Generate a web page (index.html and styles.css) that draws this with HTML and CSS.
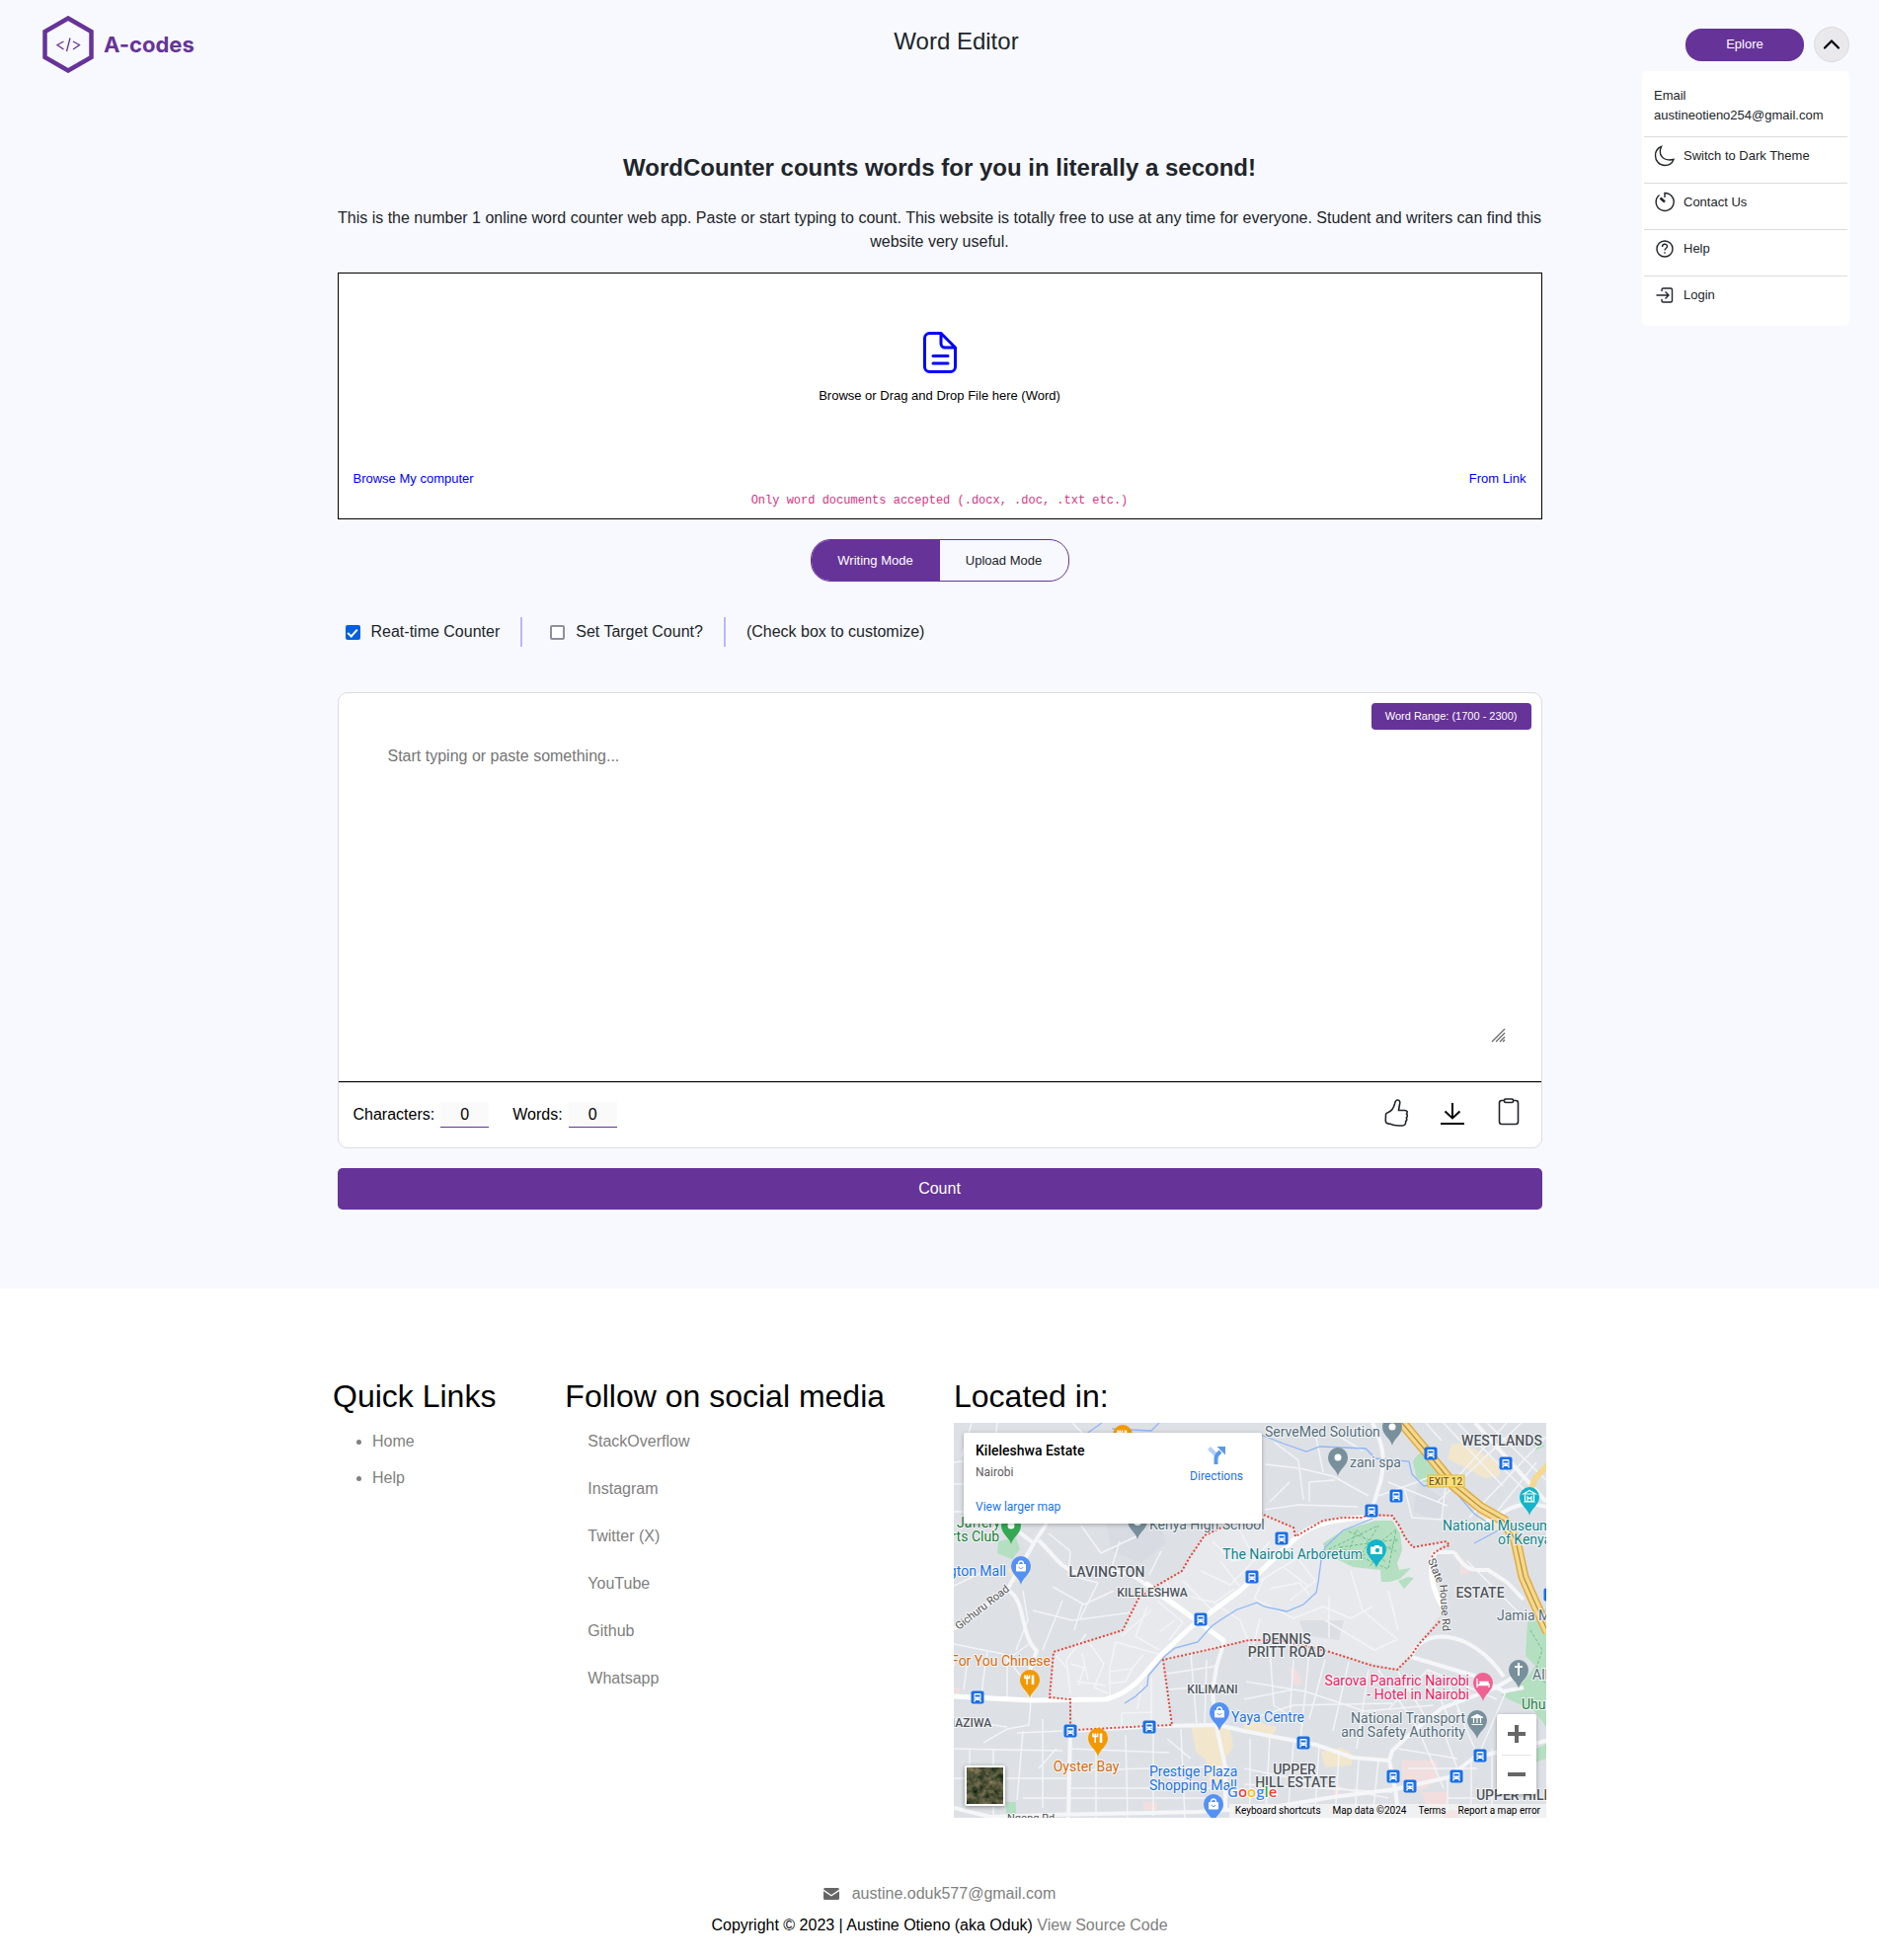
FILE: index.html
```html
<!DOCTYPE html>
<html lang="en">
<head>
<meta charset="utf-8">
<meta name="viewport" content="width=device-width, initial-scale=1">
<title>Word Editor</title>
<link rel="stylesheet" href="styles.css">
</head>
<body>
<div class="hero">
  <header class="topbar">
    <a class="brand" href="#">
      <svg class="brand-mark" viewBox="0 0 52 58" aria-hidden="true">
        <path d="M26 2.500 49.500 16v26L26 55.500 2.500 42V16z" fill="none" stroke="#663399" stroke-width="4.500"/>
        <path d="M21.500 26l-6.500 3.500 6.500 4.500M31 26l6.500 3.500-6.500 4.500M28 22.500l-3.500 13.500" fill="none" stroke="#663399" stroke-width="1.300"/>
      </svg>
      <span>A-codes</span>
    </a>
    <h1 class="title">Word Editor</h1>
    <div class="actions">
      <button class="explore" type="button">Eplore</button>
      <button class="toggle-menu" type="button" aria-label="Close menu">
        <svg width="18" height="18" viewBox="0 0 18 18"><path d="M2 12.500 9 5.500l7 7" fill="none" stroke="#000" stroke-width="2.200" stroke-linecap="round"/></svg>
      </button>
    </div>
    <nav class="menu">
      <div class="menu-user">Email<br>austineotieno254@gmail.com</div>
      <a class="menu-item" href="#">
        <svg viewBox="0 0 22 22"><path d="M7.500 1.500C3.500 3 1.500 6.500 1.500 10.500c0 5.500 4 10 9.500 10 4 0 7.500-2 9-6-7 1.500-12-1-13.500-6-.6-2.500 0-5 1-7z"/></svg>
        Switch to Dark Theme</a>
      <a class="menu-item" href="#">
        <svg viewBox="0 0 22 22"><path d="M5.500 3.500A9 9 0 1 0 11 1.500v4.500"/><path d="M6.500 6.500 11 10.500" stroke-width="2.500"/></svg>
        Contact Us</a>
      <a class="menu-item" href="#">
        <svg viewBox="0 0 22 22"><circle cx="11" cy="11" r="8"/><path d="M8.500 9c0-3.500 5-3.500 5-.5 0 2-2.500 2-2.500 4"/><path d="M11 14.200v1.600"/></svg>
        Help</a>
      <a class="menu-item" href="#">
        <svg viewBox="0 0 22 22"><path d="M8 7V5.500A1.500 1.500 0 0 1 9.500 4H17a1.500 1.500 0 0 1 1.500 1.500v11A1.500 1.500 0 0 1 17 18H9.500A1.500 1.500 0 0 1 8 16.500V15M2.500 11h12M11.500 7.500 15 11l-3.500 3.500"/></svg>
        Login</a>
    </nav>
  </header>

  <main class="content">
    <h2 class="headline">WordCounter counts words for you in literally a second!</h2>
    <p class="intro">This is the number 1 online word counter web app. Paste or start typing to count. This website is totally free to use at any time for everyone. Student and writers can find this website very useful.</p>

    <section class="dropzone">
      <svg class="file-icon" viewBox="0 0 48 48" aria-hidden="true"><path d="M13.500 4.500h11.500L39.500 19v19.500a5 5 0 0 1-5 5h-21a5 5 0 0 1-5-5v-29a5 5 0 0 1 5-5zM25 4.500v10.500a4 4 0 0 0 4 4h10.500M17 27.500h15M17 35h15"/></svg>
      <p class="drop-text">Browse or Drag and Drop File here (Word)</p>
      <div class="drop-links"><a href="#">Browse My computer</a><a href="#">From Link</a></div>
      <code class="drop-note">Only word documents accepted (.docx, .doc, .txt etc.)</code>
    </section>

    <div class="modes">
      <button class="mode mode-on" type="button">Writing Mode</button>
      <button class="mode" type="button">Upload Mode</button>
    </div>

    <div class="options">
      <label class="option"><input type="checkbox" checked>Reat-time Counter</label>
      <label class="option"><input type="checkbox">Set Target Count?</label>
      <span class="option-note">(Check box to customize)</span>
    </div>

    <section class="editor">
      <span class="range">Word Range: (1700 - 2300)</span>
      <div class="editor-body">
        <textarea aria-label="Text" placeholder="Start typing or paste something..."></textarea>
        <svg class="grip" viewBox="0 0 15 15" aria-hidden="true"><path d="M1 14 14 1M5 14l9-9M9 14l5-5M12 14l2-2" stroke="#666" stroke-width="1.200"/></svg>
      </div>
      <div class="editor-bar">
        <div class="counts">
          <label>Characters: <input type="text" value="0" readonly></label>
          <label>Words: <input type="text" value="0" readonly></label>
        </div>
        <div class="tools">
          <button type="button" aria-label="Like"><svg viewBox="0 0 24 30"><path d="M1.500 17c0-1.500 1-2 2.500-2.500C8 13 9.500 10 10.500 6c.5-2.500 1-4 3-4s2.700 2 2 4.500l-1 6 6 0c3 .2 3.200 1.800 2 3.500 1.200 1.300 1 2.800-.2 4 .8 1.500.5 2.800-.7 3.800.3 2.600-.8 4.200-3.300 4.200-4 0-7.500 0-10-1-1.500-.8-3-.8-4.500-1-2-.5-2.500-1-2.500-3z"/></svg></button>
          <button type="button" aria-label="Download"><svg viewBox="0 0 24 30"><path d="M12 5v15M4.500 13.500 12 20.500l7.500-7M0 26h24" stroke="#000" stroke-width="2"/></svg></button>
          <button type="button" aria-label="Copy"><svg viewBox="0 0 24 30"><rect x="2.500" y="2.500" width="19" height="24" rx="2.500"/><rect x="7.500" y="1" width="9" height="3.500" rx="1.200" fill="#fff"/></svg></button>
        </div>
      </div>
    </section>

    <button class="count" type="button">Count</button>
  </main>
</div>

<footer class="footer">
  <div class="footer-cols">
    <section>
      <h2>Quick Links</h2>
      <ul class="quick">
        <li><a href="#">Home</a></li>
        <li><a href="#">Help</a></li>
      </ul>
    </section>
    <section>
      <h2>Follow on social media</h2>
      <ul class="social">
        <li><a href="#">StackOverflow</a></li>
        <li><a href="#">Instagram</a></li>
        <li><a href="#">Twitter (X)</a></li>
        <li><a href="#">YouTube</a></li>
        <li><a href="#">Github</a></li>
        <li><a href="#">Whatsapp</a></li>
      </ul>
    </section>
    <section class="located">
      <h2>Located in:</h2>
      <div class="map">
        <svg class="map-canvas" viewBox="0 0 600 400" role="img" aria-label="Map of Kileleshwa Estate">
          <defs>
            <g id="bus"><rect x="-6.500" y="-6.500" width="13" height="13" rx="2" fill="#1a6fe8"/><rect x="-3.500" y="-4" width="7" height="7" rx="1" fill="#fff"/><path d="M-2.500-2.500h5v2h-5z" fill="#1a6fe8"/><path d="M-3 3v1.500M3 3v1.500" stroke="#fff" stroke-width="1.500"/><path d="M-2.500 1.300h1M1.500 1.300h1" stroke="#1a6fe8"/></g>
            <path id="pin" d="M0 19C-1 12.500-10 8.500-10 0A10 10 0 0 1 10 0C10 8.500 1 12.500 0 19z"/>
            <g id="food" fill="none" stroke="#fff"><path d="M-5-4.500v3h4.500v-3M-2.800-4.500V5" stroke-width="1.600"/><path d="M3-4.500V5" stroke-width="2.600"/></g>
            <g id="bag"><rect x="-5" y="-2" width="10" height="7.500" rx="1" fill="#fff"/><path d="M-2.500-2c0-4 5-4 5 0" fill="none" stroke="#fff" stroke-width="1.300"/><path d="M-2 1c.5 2 3.500 2 4 0" fill="none" stroke="#5491f5"/></g>
          </defs>
          <rect width="600" height="400" fill="#dde1e6"/>
          <path fill="#e7e9ed" d="M311 92 344 106 346 115 374 99 414 96 444 94 457 116 465 126 499 120 487 131 484 136 497 189 471 224 449 250 381 232 331 220 299 220 212 240 221 306 122 311 118 280 97 278 101 232 171 210 187 178 231 150 254 114z"/>
          <path fill="#d6dadf" d="M154 102h55l6 20-25 20-30-12zM350 200h45l-5 20-35-5zM470 60l30 20-10 18-25-8z" opacity=".7"/>
          <g fill="#b4dfc1">
            <path d="M374 122 394 109 427 99 444 99 452 112 454 129 449 142 451 149 463 147 452 158 441 161 433 161 432 149 404 146 384 136 376 131z"/>
            <path d="M465 40c4-12 16-12 21-6l7 18c-4 10-18 10-24 4zM450 160l10-4 6 1-10 11zM45 120l18-4 4 12-8 10-15-6zM586 18l8-4 4 10-9 4z"/>
            <path d="M581 202 600 188v120l-12-16-34-16 23-14 12-16-10-10zM590 330l10-5v15l-12 4zM53 384h10v14H53z"/>
          </g>
          <path fill="#f2e6cc" d="M504 22 515 20 556 42 552 54 538 56 500 36zM241 308l38-2 4 22-8 12 4 25-20 2-4-26-10-8zM294 300l33 8-3 8-30-6zM372 333l20-4 14 8-4 10-26 2zM54 148l18-6 6 10-16 10zM530 92l30 8-6 10-22-6z"/>
          <path fill="#f2dedf" d="M454 342h36v20l-16 10-20-4zM474 374h27v19l-19 6zM514 136l12 14-13 4zM339 246l10 6 4 12-8 2zM192 384h14v8h-14zM384 368l8-2-2 14-6-4zM0 268h6v6H0z"/>
          <g class="road thin">
            <path d="M0 40 30 36 60 48 96 50M0 62h22l18-30 4-32M18 0 8 34M72 12l14 30M120 0l10 10M0 90h30l22-12M40 108 60 60M0 165 40 146M96 112l22 18-2 24 30 8-18 36M129 104l20 28 38-18M160 146l8-26M210 130l-12 24M70 170l5 30-12 30M80 190l40 10 60-8M100 166l32 18 30-14M130 184l-8 26M90 230l20-50"/>
            <path d="M315 42 350 46 384 54 420 74M315 88l34-5 60 2M325 20l24 18 5 40M360 80V60l26-2M366 10l8 40M384 10l30 18M440 60l60 24M430 74l55-20M340 60l-20 20M456 64l8 32 30 2 4-34M520 140l60 60M510 0l70 70M540 0l60 58M575 0 490 80M600 14 522 96M560 0 500 66M496 0l60 64M478 0l16 18M590 40l-40 50"/>
            <path d="M134 214l-20 26 4 34M164 222l-6 26v32M164 222l50 14M158 252l22-3 12-14M156 264l18-2 8-16M206 180l26 22-14 18M196 186l-12 30 24 14M118 244l14 4-6 18M130 234l6 26M124 262l30 4M170 310v-16l30-1v14M200 258v36M186 290l4-24M224 200l-16 12M200 190l-30 26M104 236l12 14M138 224l14 20-10 24 14 6"/>
            <path d="M260 180l30 20 10 26M314 158l-10 20 40 20 30-12 28 12 22-12M300 240l10-42M320 168l30-6 10 12M346 134l20 26-26 20M334 146l26 20M310 160l46-28M380 176v42M402 150l12 40 36 30M440 170l10 40M376 200l50 30 22-10M320 226l4 60 30 20M344 240l-4 60M360 232l-10 100M376 240l-16 60M400 242l-16 70M420 250l-12 80M296 262l60 10 60 20 70-6M294 280l50-10M300 300l44-14 100-2M430 250l40 60M450 252l30 50M480 250l26 60M500 262l16 40M440 290l40-40 70 30"/>
            <path d="M270 140l20 26M250 150l30 14 20-20M232 160l30 30M262 120l20 20 30-6M290 110l16 30M320 120l-20 24M240 176l24 6 20-14M214 158l10 20"/>
            <path d="M216 240l52-14M218 270l50-4M216 254l52-8M240 234l6 70M230 310l4 90M256 240l-2 66M202 308v90M174 316l2 84M144 330v70M118 330l100 4M118 352l160-4M118 370h160M70 380h200M78 282l-2 24-22 4-24 14M0 300l54 8M0 330l110 2M40 330v70M70 312l-6 70M90 300v90M0 360h116M16 330v54M54 280V240l22-16M110 312l-46 2M0 224l50 10 24 30M14 240l-4 30M34 230l-6 44M104 330l-18 20M216 320l24 20M214 358l30 6"/>
            <path d="M300 320v80M320 316l-4 80M344 324l-6 76M370 328l-4 60M390 336l-4 64M410 342l-4 58M430 342l-6 58M294 350l146 30M294 366l150 8M470 310l26 60M490 296l22 60M510 290l22 50M450 330l60 10M460 350h70M560 270l-30 70M500 358v42M524 340v60M545 330v70M500 380h60"/>
          </g>
          <g class="road mid">
            <path d="M94 102 81 122 54 169 0 209M86 119c15 14 20 26 36 32 30 2 50-10 78 18l44 30 30 22-8 26-4 26 3 30 10 46v45M81 122 60 106M54 169c20 10 12 45 30 62l-7 20v30"/>
            <path d="M118 312l-2 88M118 312l90-5 60-1 26 6 73 14 37 13 37 3 3-10 17-16 33-27 53-20 30-17M463 237l64 19 30 16 20-4M463 237c10-30 60-30 94 20M441 342l6 29 4 29M294 394l90-15 63-8 54-12 26-20 73-17M0 390l37 9 57-2 153-3 47-3"/>
            <path d="M424 0c10 20 14 36 8 60l-10 32M507 131c12 20 18 18 34 18l20 13 16 17M544 99c20-16 36-20 56-14M487 131l20 0M528 0l72 80M522 108l30-14"/>
          </g>
          <path class="road main" d="M0 277 77 281 154 280C185 272 195 250 211 234L241 206 291 169 347 116C365 100 390 98 422 95M194 162l80 59M497 189c-14-20-16-42-10-58"/>
          <path d="M311 12 334 21 357 29 371 24 417 26 427 36 461 39 464 52 476 64 490 62M507 69l20 23 12 8M173 284l11-7 12-11 1-10 17-20 10-8 23-6 14-16 10-7 16-10 20-7 7 4 23 5 17-7 13-12 2-10 3-23 4-13 18-17 30-12M130 14l20-14M160 6l40 2 8-8M527 122l26-14" fill="none" stroke="#8fb6f6" stroke-width="1.300"/>
          <path d="M380 128l50-24-20 34 38-30-8 40-50-22 60-8-30 28M400 110l48 20M398 136l10-28 30 34M584 210l12 20-8 24 12 10" fill="none" stroke="#6cbd87" stroke-dasharray="3 2"/>
          <g fill="none">
            <path d="M454 0 481 32 507 64 534 86 557 99 569 119 577 156 587 179 602 212" stroke="#e0ab45" stroke-width="11"/>
            <path d="M454 0 481 32 507 64 534 86 557 99 569 119 577 156 587 179 602 212" stroke="#f4d98e" stroke-width="8"/>
            <path d="M454 0 481 32 507 64 534 86 557 99 569 119 577 156 587 179 602 212" stroke="#bd8d31" stroke-width="1.200"/>
            <path d="M602 42 589 56 584 69" stroke="#f4d98e" stroke-width="6"/>
          </g>
          <path class="boundary" d="M492 201 471 224 463 236 449 250 424 246 381 232 331 220 299 220 274 226 212 240 221 306 197 307 122 311 118 310V280L97 278 101 232 171 210 187 178 202 167 231 150 239 136 254 114 271 106 311 92 344 106 346 115 374 99 394 96 414 96 419 93 444 94 451 104 457 116 465 126 499 120 502 124 496 126 487 131 484 136"/>

          <rect x="480" y="53" width="37" height="12" fill="#fbdf7b" stroke="#e5b93c"/>
          <g class="labels">
            <g fill="#546e7a">
              <text x="315" y="14">ServeMed Solution</text><text x="401" y="45">zani spa</text><text x="198" y="108">Kenya High School</text>
              <text x="550" y="200">Jamia Mosque</text><text x="586" y="260">All Saints</text>
              <text class="end" x="518" y="304">National Transport</text><text class="end" x="518" y="318">and Safety Authority</text>
            </g>
            <g fill="#12858d"><text class="end" x="414" y="138">The Nairobi Arboretum</text><text x="495" y="109">National Museum</text><text x="551" y="123">of Kenya</text></g>
            <g fill="#188038"><text x="3" y="106">Jaffery</text><text class="end" x="46" y="120">rts Club</text><text x="575" y="290">Uhuru</text></g>
            <g fill="#1a73e8"><text class="end" x="53" y="155">gton Mall</text><text x="281" y="303">Yaya Centre</text><text x="198" y="358">Prestige Plaza</text><text x="198" y="372">Shopping Mall</text></g>
            <g fill="#d56e0c"><text class="end" x="98" y="246">For You Chinese</text><text class="mid-label" x="134" y="353">Oyster Bay</text></g>
            <g fill="#e91e63"><text class="end" x="522" y="266">Sarova Panafric Nairobi</text><text class="end" x="522" y="280">- Hotel in Nairobi</text></g>
            <g class="area"><text x="155" y="156">LAVINGTON</text><text x="555" y="23">WESTLANDS</text><text x="533" y="177">ESTATE</text><text x="337" y="224">DENNIS</text><text x="337" y="237">PRITT ROAD</text><text x="345" y="356">UPPER</text><text x="346" y="369">HILL ESTATE</text><text x="567" y="382">UPPER HILL</text></g>
            <g class="area small"><text x="201" y="176">KILELESHWA</text><text x="262" y="274">KILIMANI</text><text x="18" y="308">IAZIWA</text></g>
            <g class="street"><text transform="translate(5 210) rotate(-38)">Gichuru Road</text><text transform="translate(480 139) rotate(68)">State</text><text transform="translate(492 164) rotate(86)">House Rd</text><text x="54" y="404">Ngong Rd</text></g>
            <text class="exit" x="498" y="63">EXIT 12</text>
          </g>

          <g>
            <use href="#bus" x="302" y="156"/><use href="#bus" x="483" y="31"/><use href="#bus" x="559" y="41"/><use href="#bus" x="448" y="74"/><use href="#bus" x="423" y="89"/><use href="#bus" x="332" y="117"/><use href="#bus" x="604" y="174"/><use href="#bus" x="250" y="199"/><use href="#bus" x="24" y="278"/><use href="#bus" x="118" y="312"/><use href="#bus" x="198" y="308"/><use href="#bus" x="354" y="324"/><use href="#bus" x="445" y="358"/><use href="#bus" x="462" y="368"/><use href="#bus" x="509" y="358"/><use href="#bus" x="533" y="337"/>
          </g>
          <g fill="#78909c">
            <use href="#pin" x="389" y="35"/><use href="#pin" x="444" y="4"/><use href="#pin" x="186" y="99"/><use href="#pin" x="530" y="301"/><use href="#pin" x="572" y="250"/>
          </g>
          <g fill="#12b5cb"><use href="#pin" x="583" y="75"/><use href="#pin" x="428" y="128"/></g>
          <use href="#pin" x="58" y="104" fill="#34a853"/>
          <g fill="#5491f5"><use href="#pin" x="68" y="145"/><use href="#pin" x="269" y="293"/><use href="#pin" x="263" y="386"/></g>
          <g fill="#f29900"><use href="#pin" x="171" y="12"/><use href="#pin" x="77" y="260"/><use href="#pin" x="146" y="319"/></g>
          <use href="#pin" x="536" y="263" fill="#f06292"/>
          <circle cx="504" cy="400" r="8" fill="#f28b82" opacity=".7"/>
          <g fill="#fff"><circle cx="389" cy="35" r="3.500"/><circle cx="444" cy="4" r="3.500"/><circle cx="58" cy="104" r="3.500"/><circle cx="186" cy="100" r="4"/></g>
          <use href="#food" x="77" y="260"/><use href="#food" x="146" y="319"/><use href="#food" x="171" y="12"/>
          <use href="#bag" x="68" y="145"/><use href="#bag" x="269" y="293"/><use href="#bag" x="263" y="386"/>
          <path d="M572 243v13M568 247h8" stroke="#fff" stroke-width="2"/>
          <path d="M530 259v9M542 264v4M530 265.500h12M533 262.500h8v2h-8z" stroke="#fff" stroke-width="1.300" fill="#fff"/>
          <path d="M524 298.500l6-3 6 3zM526.500 299v5M530 299v5M533.500 299v5M524.500 305.500h11" stroke="#fff" stroke-width="1.200" fill="#fff"/>
          <path d="M577 72l6-3.500 6 3.500zM578.500 73v6.500h9V73M577.500 80h11M581 79v-4l2 2 2-2v4" stroke="#fff" stroke-width="1.200" fill="none"/>
          <path d="M422 125.500h3.500l1-1.500h4l1 1.500h2.500v7.500h-12z" fill="#fff"/><circle cx="429" cy="129" r="2.200" fill="#12b5cb"/>
          <text class="google" x="277" y="379"><tspan fill="#4285f4">G</tspan><tspan fill="#ea4335">o</tspan><tspan fill="#fbbc04">o</tspan><tspan fill="#4285f4">g</tspan><tspan fill="#34a853">l</tspan><tspan fill="#ea4335">e</tspan></text>
        </svg>

        <div class="place">
          <div class="place-info">
            <strong>Kileleshwa Estate</strong>
            <span>Nairobi</span>
            <a href="#">View larger map</a>
          </div>
          <a class="directions" href="#">
            <svg width="18" height="18" viewBox="0 0 18 18" aria-hidden="true"><path d="M1.500 1.500 8 8" stroke="#b3d1f8" stroke-width="4"/><path d="M8.500 18v-6c0-2 .5-3 2-4.500L13 5" fill="none" stroke="#5a99ea" stroke-width="4"/><path d="M9.500 0H18v8.500z" fill="#5a99ea"/></svg>
            Directions</a>
        </div>
        <div class="zoom">
          <button type="button" aria-label="Zoom in"><svg width="18" height="18" viewBox="0 0 18 18"><path d="M9 0v18M0 9h18" stroke="#666" stroke-width="4"/></svg></button>
          <button type="button" aria-label="Zoom out"><svg width="18" height="18" viewBox="0 0 18 18"><path d="M0 9h18" stroke="#666" stroke-width="4"/></svg></button>
        </div>
        <button class="satellite" type="button" aria-label="Show satellite imagery">
          <svg viewBox="0 0 37 37" aria-hidden="true">
            <filter id="grain" color-interpolation-filters="sRGB"><feTurbulence type="fractalNoise" baseFrequency=".15" numOctaves="4" seed="8"/><feColorMatrix values=".7 0 0 0 -.03  .5 0 0 0 .08  .45 0 0 0 0  0 0 0 0 1"/></filter>
            <rect width="37" height="37" filter="url(#grain)"/>
          </svg>
        </button>
        <div class="credits"><a href="#">Keyboard shortcuts</a><span>Map data ©2024</span><a href="#">Terms</a><a href="#">Report a map error</a></div>
      </div>
    </section>
  </div>
  <div class="legal">
    <a class="mail" href="#"><svg width="16" height="12" viewBox="0 0 16 12" aria-hidden="true"><path d="M1.500 0h13A1.500 1.500 0 0 1 16 1.500L8 7 0 1.500A1.500 1.500 0 0 1 1.500 0zM0 3.200 8 8.600l8-5.400v7.300a1.500 1.500 0 0 1-1.500 1.500h-13A1.500 1.500 0 0 1 0 10.500z" fill="#666"/></svg>austine.oduk577@gmail.com</a>
    <p>Copyright © 2023 | Austine Otieno (aka Oduk) <a href="#">View Source Code</a></p>
  </div>
</footer>
</body>
</html>
```
FILE: styles.css
```css
* { box-sizing: border-box; }

body {
  margin: 0;
  background: #fff;
  color: #212529;
  font: 16px/24px "Liberation Sans", Arial, sans-serif;
}

h1, h2, p, ul { margin: 0; padding: 0; font-weight: 400; }
a { color: inherit; text-decoration: none; }
button, input, textarea { font: inherit; color: inherit; }
button { cursor: pointer; border: 0; padding: 0; background: none; }
svg { display: block; }

.hero { background: #f8f9ff; padding-bottom: 80px; }

/* Header */
.topbar {
  position: relative;
  display: flex;
  justify-content: space-between;
  align-items: center;
  height: 90px;
  padding: 0 30px;
}
.brand {
  display: flex;
  align-items: center;
  gap: 10px;
  width: 200px;
  padding-left: 13px;
  color: #639;
  font: 700 22px/26px Inter, sans-serif;
}
.brand-mark { width: 52px; height: 58px; }
.title { padding-bottom: 6px; font-size: 24px; line-height: 28px; }
.actions { display: flex; align-items: center; gap: 10px; }
.explore {
  width: 120px;
  height: 33px;
  border-radius: 16px;
  background: #639;
  color: #fff;
  font-size: 13px;
}
.toggle-menu {
  display: grid;
  place-items: center;
  width: 36px;
  height: 36px;
  border: 1px solid #dcdcdf;
  border-radius: 50%;
  background: #e9e9ed;
}
.menu {
  position: absolute;
  top: 72px;
  right: 30px;
  width: 210px;
  padding: 0 2px 4px;
  border-radius: 5px;
  background: #fff;
  font-size: 13px;
  line-height: 20px;
}
.menu-user { padding: 15px 10px 11px; }
.menu-item {
  display: flex;
  align-items: center;
  gap: 8px;
  height: 47px;
  padding: 0 10px 8px;
  border-top: 1px solid #dcdcdc;
}
.menu-item svg {
  width: 22px;
  height: 22px;
  fill: none;
  stroke: #212529;
  stroke-width: 1.4;
}

/* Main column */
.content {
  display: flex;
  flex-direction: column;
  max-width: 1220px;
  margin: 0 auto;
  padding-top: 65px;
}
.headline { margin-bottom: 25px; font-size: 24px; font-weight: 700; line-height: 29px; text-align: center; }
.intro { margin-bottom: 19px; text-align: center; }

.dropzone {
  display: flex;
  flex-direction: column;
  align-items: center;
  padding: 56px 15px 8px;
  border: 1px solid #000;
  background: #fff;
  font-size: 13px;
  line-height: 20px;
}
.file-icon {
  width: 48px;
  height: 48px;
  fill: none;
  stroke: #00f;
  stroke-width: 3;
  stroke-linecap: round;
  stroke-linejoin: round;
}
.drop-text { margin: 10px 0 64px; color: #000; }
.drop-links { display: flex; justify-content: space-between; align-self: stretch; color: #00f; }
.drop-note { margin-top: 2px; color: #d63384; font: 12px/20px "Liberation Mono", monospace; }

.modes {
  display: grid;
  grid-template-columns: 1fr 1fr;
  align-self: center;
  width: 262px;
  height: 43px;
  margin: 20px 0 36px;
  overflow: hidden;
  border: 1px solid #639;
  border-radius: 20px;
  font-size: 13px;
}
.mode-on { background: #639; color: #fff; }

.options { display: flex; align-items: center; height: 30px; margin-bottom: 46px; }
.option {
  display: flex;
  align-items: center;
  gap: 11px;
  height: 30px;
  padding: 0 21px 0 28px;
  border-right: 2px solid #b7b8fa;
}
.option:first-child { padding-left: 8px; }
.option-note { padding-left: 21px; }
.option input {
  appearance: none;
  display: grid;
  place-items: center;
  width: 15px;
  height: 15px;
  margin: 0;
  border: 2px solid #8f8f9d;
  border-radius: 2px;
  background: #fff;
}
.option input:checked { border-color: #0060df; background: #0060df; }
.option input:checked::after {
  content: "";
  box-sizing: border-box;
  width: 6px;
  height: 10px;
  margin-bottom: 3px;
  border: solid #fff;
  border-width: 0 2px 2px 0;
  transform: rotate(42deg);
}

/* Editor */
.editor {
  position: relative;
  margin-bottom: 20px;
  border: 1px solid #dcdcdf;
  border-radius: 10px;
  background: #fff;
}
.range {
  position: absolute;
  top: 10px;
  right: 10px;
  padding: 0 14px;
  border-radius: 4px;
  background: #639;
  color: #fff;
  font-size: 11px;
  line-height: 27px;
}
.editor-body { position: relative; padding: 38px 36px; border-bottom: 1px solid #000; }
.editor-body textarea {
  display: block;
  width: 100%;
  height: 317px;
  padding: 13px;
  border: 1px solid transparent;
  outline: 0;
  background: transparent;
  resize: none;
}
.editor-body textarea::placeholder { color: #757575; }
.grip { position: absolute; right: 36px; bottom: 39px; width: 15px; height: 15px; }
.editor-bar {
  display: flex;
  justify-content: space-between;
  height: 66px;
  padding: 15px 21px 0 15px;
  border-top: 1px solid #dcdcdf;
  color: #000;
}
.counts { display: flex; gap: 24px; height: 34px; align-items: center; }
.counts label { display: flex; align-items: center; gap: 6px; }
.counts input {
  width: 49px;
  height: 26px;
  padding: 0;
  border: 0;
  border-bottom: 1px solid #639;
  background: #fafafa;
  text-align: center;
}
.tools { display: flex; gap: 33px; }
.tools button { height: 30px; }
.tools svg { width: 24px; height: 30px; fill: none; stroke: #212529; stroke-width: 1.6; }
.count { height: 42px; border-radius: 5px; background: #639; color: #fff; }

/* Footer */
.footer { padding: 90px 20px 23px; }
.footer-cols {
  display: flex;
  justify-content: space-between;
  max-width: 1229px;
  margin: 0 auto 65px;
  color: #808080;
}
.footer h2 { margin-bottom: 8px; color: #000; font-size: 32px; line-height: 38px; }
.quick { padding: 7px 0 0 40px; }
.quick li { margin-bottom: 13px; }
.social { padding: 7px 0 0 23px; list-style: none; }
.social li { margin-bottom: 24px; }
.located { flex: 0 1 600px; }

.map { position: relative; overflow: hidden; font-family: Roboto, sans-serif; }
.map-canvas { width: 100%; height: auto; }
.road { fill: none; stroke: #f5f6f8; stroke-linejoin: round; }
.thin { stroke: #f2f4f6; stroke-width: 1.5; }
.mid { stroke-width: 4; }
.main { stroke: #fff; stroke-width: 5; }
.boundary { fill: none; stroke: #ea4335; stroke-width: 2; stroke-dasharray: 2 2; }
.labels { font-size: 14px; paint-order: stroke; stroke: #f4f5f7; stroke-width: 2; stroke-linejoin: round; }
.labels .end { text-anchor: end; }
.mid-label { text-anchor: middle; }
.area { fill: #50555c; font-weight: 500; text-anchor: middle; }
.small { font-size: 12px; }
.street { fill: #555; font-size: 11px; }
.exit { fill: #5c4c1c; stroke: none; font-size: 10px; text-anchor: middle; }
.google { font: 600 15px "Open Sans", sans-serif; paint-order: stroke; stroke: #fff; stroke-width: 2; }

.place {
  position: absolute;
  top: 10px;
  left: 10px;
  display: flex;
  justify-content: space-between;
  width: 302px;
  height: 92px;
  padding: 9px 19px 0 12px;
  border-radius: 2px;
  background: #fff;
  box-shadow: 0 1px 4px rgba(0, 0, 0, .3);
  color: #5b5b5b;
  font-size: 12px;
  line-height: 16px;
}
.place-info { display: flex; flex-direction: column; }
.place strong { margin-bottom: 5px; color: #000; font-size: 14px; font-weight: 500; line-height: 18px; }
.place a { color: #1a73e8; }
.place-info a { margin-top: 19px; }
.directions { display: flex; flex-direction: column; align-items: center; gap: 4px; padding-top: 5px; }
.zoom {
  position: absolute;
  right: 10px;
  bottom: 24px;
  display: grid;
  grid-template-rows: 1fr 1fr;
  width: 40px;
  height: 81px;
  padding: 0 5px;
  border-radius: 2px;
  background: #fff;
  box-shadow: 0 1px 4px rgba(0, 0, 0, .3);
}
.zoom button { display: grid; place-items: center; }
.zoom button + button { border-top: 1px solid #e6e6e6; }
.satellite {
  position: absolute;
  bottom: 12px;
  left: 11px;
  width: 41px;
  height: 41px;
  overflow: hidden;
  border: 2px solid #fff;
  border-radius: 2px;
  box-shadow: 0 1px 4px rgba(0, 0, 0, .4);
}
.credits {
  position: absolute;
  right: 0;
  bottom: 0;
  display: flex;
  gap: 12px;
  padding: 0 6px;
  background: rgba(245, 245, 245, .8);
  color: #000;
  font-size: 10px;
  line-height: 14px;
}

.legal { display: flex; flex-direction: column; align-items: center; gap: 8px; color: #000; }
.legal a { color: #808080; }
.mail { display: flex; align-items: center; gap: 13px; }
```
